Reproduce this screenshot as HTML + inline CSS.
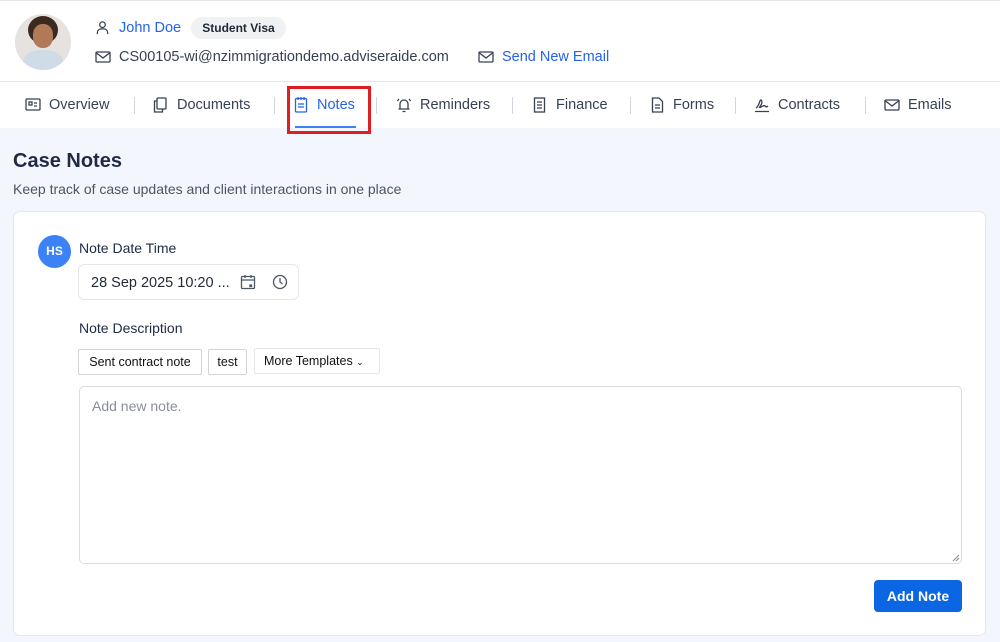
<!DOCTYPE html>
<html><head><style>
*{box-sizing:border-box;margin:0;padding:0}
body{width:1000px;height:642px;overflow:hidden;background:#f3f6fd;font-family:"Liberation Sans",sans-serif;color:#1f2937;position:relative}
.a{position:absolute}
.hdr{left:0;top:0;width:1000px;height:128px;background:#fff;border-top:1px solid #e5e7eb}
.ic{position:absolute}
.tab{position:absolute;top:96px;font-size:14.5px;color:#374151}
.sep{position:absolute;top:96px;width:1px;height:17px;background:#d1d5db}
</style></head><body>
<div class="a hdr">
  <div class="a" style="left:15px;top:13px;width:56px;height:56px;border-radius:50%;background:#e5e2df;overflow:hidden">
    <div class="a" style="left:13px;top:2px;width:30px;height:28px;border-radius:50%;background:#3b2a20"></div>
    <div class="a" style="left:18px;top:10px;width:20px;height:24px;border-radius:45%;background:#b07a58"></div>
    <div class="a" style="left:8px;top:36px;width:40px;height:26px;border-radius:45% 45% 0 0;background:#cfdbe6"></div>
  </div>
  <svg class="ic" style="left:95px;top:19px" width="15" height="15" viewBox="0 0 16 16" fill="none" stroke="#374151" stroke-width="1.3"><circle cx="8" cy="5" r="3"/><path d="M2.5 15v-1.5a4 4 0 0 1 4-4h3a4 4 0 0 1 4 4V15"/></svg>
  <div class="a" style="left:119px;top:19px;font-size:14.5px;color:#2563eb">John Doe</div>
  <div class="a" style="left:191px;top:16px;width:95px;height:22px;border-radius:11px;background:#f0f1f3;font-size:12px;font-weight:bold;color:#1f2937;text-align:center;line-height:22px">Student Visa</div>
  <svg class="ic" style="left:95px;top:49px" width="16" height="14" viewBox="0 0 16 14" fill="none" stroke="#374151" stroke-width="1.3"><rect x="1" y="2" width="14" height="10" rx="1"/><path d="M1.5 3l6.5 5 6.5-5"/></svg>
  <div class="a" style="left:119px;top:48px;font-size:14.5px;color:#374151">CS00105-wi@nzimmigrationdemo.adviseraide.com</div>
  <svg class="ic" style="left:478px;top:49px" width="16" height="14" viewBox="0 0 16 14" fill="none" stroke="#374151" stroke-width="1.3"><rect x="1" y="2" width="14" height="10" rx="1"/><path d="M1.5 3l6.5 5 6.5-5"/></svg>
  <div class="a" style="left:502px;top:48px;font-size:14.5px;color:#2563eb">Send New Email</div>
  <div class="a" style="left:0;top:80px;width:1000px;height:1px;background:#e5e7eb"></div>

  <svg class="ic" style="left:25px;top:97px" width="16" height="13" viewBox="0 0 16 13" fill="none" stroke="#374151" stroke-width="1.3"><rect x="1" y="1" width="14" height="11" rx="1"/><rect x="4" y="4" width="3" height="3"/><path d="M9 5h3M9 8h3"/></svg>
  <div class="tab" style="left:49px">Overview</div><div class="sep" style="left:134px"></div>
  <svg class="ic" style="left:153px;top:96px" width="14" height="16" viewBox="0 0 14 16" fill="none" stroke="#374151" stroke-width="1.3"><rect x="4" y="1" width="9" height="11" rx="1"/><path d="M4 4H1.5v11h8v-3"/></svg>
  <div class="tab" style="left:177px">Documents</div><div class="sep" style="left:274px"></div>
  <svg class="ic" style="left:294px;top:95px" width="14" height="17" viewBox="0 0 14 17" fill="none" stroke="#2563eb" stroke-width="1.3"><rect x="1.5" y="2.5" width="11" height="13.5" rx="1"/><path d="M4 1v3M7 1v3M10 1v3M4 8h6M4 11h6"/></svg>
  <div class="tab" style="left:317px;color:#2563eb">Notes</div>
  <div class="a" style="left:295px;top:125px;width:61px;height:2px;background:#3b82f6"></div>
  <div class="a" style="left:287px;top:85px;width:84px;height:48px;border:3px solid #e11d24"></div>
  <div class="sep" style="left:376px"></div>
  <svg class="ic" style="left:396px;top:96px" width="16" height="16" viewBox="0 0 16 16" fill="none" stroke="#374151" stroke-width="1.3"><path d="M4 12V7a4 4 0 0 1 8 0v5M2.5 12h11M6.5 14.5h3M1.5 4l1.5-2M14.5 4L13 2"/></svg>
  <div class="tab" style="left:420px">Reminders</div><div class="sep" style="left:512px"></div>
  <svg class="ic" style="left:533px;top:96px" width="13" height="16" viewBox="0 0 13 16" fill="none" stroke="#374151" stroke-width="1.3"><rect x="1.5" y="1" width="10" height="14"/><path d="M4 5h5M4 8h5M4 11h5"/></svg>
  <div class="tab" style="left:556px">Finance</div><div class="sep" style="left:630px"></div>
  <svg class="ic" style="left:651px;top:96px" width="13" height="16" viewBox="0 0 13 16" fill="none" stroke="#374151" stroke-width="1.3"><path d="M1.5 1h6.5l3.5 3.5V15h-10z"/><path d="M4 8h5M4 11h5"/></svg>
  <div class="tab" style="left:673px">Forms</div><div class="sep" style="left:735px"></div>
  <svg class="ic" style="left:754px;top:96px" width="16" height="16" viewBox="0 0 16 16" fill="none" stroke="#374151" stroke-width="1.3"><path d="M2 11c2-1 3-4 4-7s3 1 1 4-2 3 0 2 3-2 4-1 2 1 3 0M1 14.5h14"/></svg>
  <div class="tab" style="left:778px">Contracts</div><div class="sep" style="left:865px"></div>
  <svg class="ic" style="left:884px;top:97px" width="16" height="14" viewBox="0 0 16 14" fill="none" stroke="#374151" stroke-width="1.3"><rect x="1" y="2" width="14" height="10" rx="1"/><path d="M1.5 3l6.5 5 6.5-5"/></svg>
  <div class="tab" style="left:908px">Emails</div>
</div>

<div class="a" style="left:13px;top:150px;font-size:20px;font-weight:bold;color:#1f2a44">Case Notes</div>
<div class="a" style="left:13px;top:181px;font-size:14px;color:#4b5563">Keep track of case updates and client interactions in one place</div>

<div class="a" style="left:13px;top:211px;width:973px;height:425px;background:#fff;border:1px solid #e5e7eb;border-radius:7px">
  <div class="a" style="left:24px;top:23px;width:33px;height:33px;border-radius:50%;background:#3b82f6;color:#fff;font-size:12px;font-weight:bold;text-align:center;line-height:33px">HS</div>
  <div class="a" style="left:65px;top:28px;font-size:14px;color:#1f2a44">Note Date Time</div>
  <div class="a" style="left:64px;top:52px;width:221px;height:36px;border:1px solid #e5e7eb;border-radius:6px"></div>
  <div class="a" style="left:77px;top:63px;font-size:14.5px;color:#1f2937">28 Sep 2025 10:20 ...</div>
  <svg class="ic" style="left:226px;top:62px" width="16" height="16" viewBox="0 0 16 16" fill="none" stroke="#4b5563" stroke-width="1.3"><rect x="1.5" y="2.5" width="13" height="12" rx="1"/><path d="M1.5 6h13M5 1v3M11 1v3"/><rect x="10" y="11" width="1.5" height="1.5" fill="#4b5563"/></svg>
  <svg class="ic" style="left:258px;top:62px" width="16" height="16" viewBox="0 0 16 16" fill="none" stroke="#4b5563" stroke-width="1.3"><circle cx="8" cy="8" r="6.5"/><path d="M8 4v4l2.5 2"/></svg>
  <div class="a" style="left:65px;top:108px;font-size:14px;color:#1f2a44">Note Description</div>
  <div class="a" style="left:64px;top:137px;width:124px;height:26px;border:1px solid #d1d5db;border-radius:2px;font-size:12.5px;color:#111;text-align:center;line-height:24px">Sent contract note</div>
  <div class="a" style="left:194px;top:137px;width:39px;height:26px;border:1px solid #d1d5db;border-radius:2px;font-size:12.5px;color:#111;text-align:center;line-height:24px">test</div>
  <div class="a" style="left:240px;top:136px;width:126px;height:26px;border:1px solid #e5e7eb;border-radius:2px;font-size:12.5px;color:#111;line-height:24px;padding-left:9px">More Templates <span style="font-size:9px">&#8964;</span></div>
  <div class="a" style="left:65px;top:174px;width:883px;height:178px;border:1px solid #d9dce1;border-radius:5px"></div>
  <svg class="ic" style="left:938px;top:342px" width="8" height="8" viewBox="0 0 8 8" stroke="#888" stroke-width="1"><path d="M1 7L7 1M4 7L7 4"/></svg>
  <div class="a" style="left:78px;top:186px;font-size:14px;color:#8a8f98">Add new note.</div>
  <div class="a" style="left:860px;top:368px;width:88px;height:32px;background:#0b66e4;border-radius:4px;color:#fff;font-size:14px;font-weight:bold;text-align:center;line-height:32px">Add Note</div>
</div>
</body></html>
